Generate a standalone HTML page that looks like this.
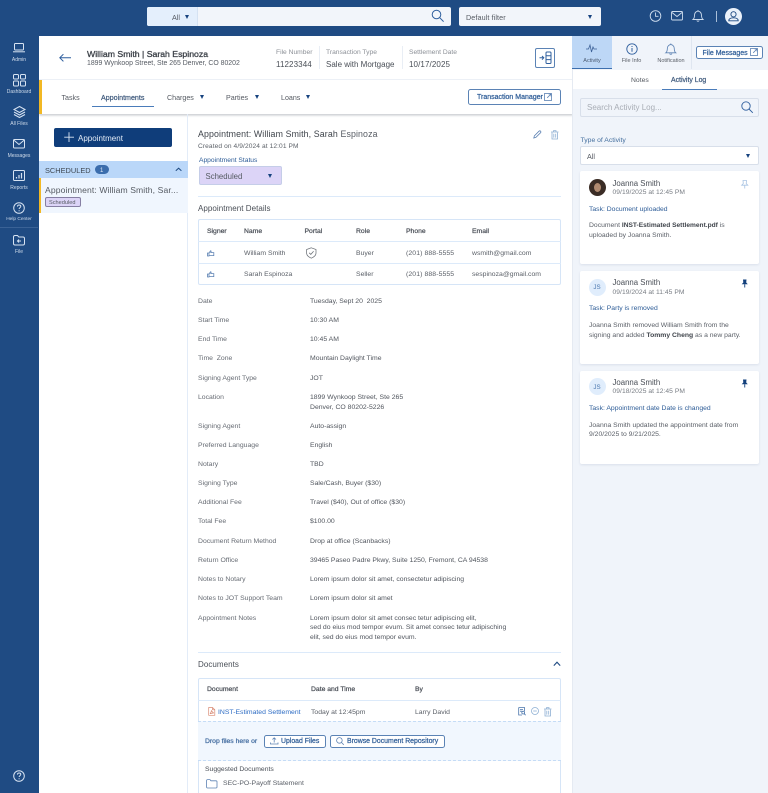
<!DOCTYPE html>
<html style="height:793px;overflow:hidden"><head><meta charset="utf-8"><style>
*{box-sizing:border-box}
html,body{margin:0;padding:0}
body{width:768px;height:793px;overflow:hidden;position:relative;background:#fff;font-family:"Liberation Sans",sans-serif;color:#4a4f57}
#root{position:absolute;left:0;top:0;width:768px;height:793px;overflow:hidden;background:#fff}
.a,.t,.b{position:absolute}
.t{white-space:nowrap;line-height:12px;font-size:6.85px;letter-spacing:0;transform:translateY(-5px)}
.m{font-weight:normal;-webkit-text-stroke:.22px currentColor}
.nav{color:#cfdbea;font-size:5px;width:38px;left:0;text-align:center;letter-spacing:0}
svg{position:absolute;overflow:visible;fill:none}
.wi{stroke:#d7e3f2;stroke-width:1}
.bi{stroke:#2f5f9e;stroke-width:1}
.gi{stroke:#5d82b3;stroke-width:1}
.lbl{color:#666b73;left:198px}
.val{color:#50555d;left:310px}
.tab{font-size:7.1px;color:#555a62}
.btn{border:1px solid #5b83b5;border-radius:2.5px;background:#fff;position:absolute}
.blue{color:#2d5c97}
.card{position:absolute;left:580px;width:179px;background:#fff;border-radius:2px;box-shadow:0 1px 2px rgba(120,140,170,.18)}
.tri{position:absolute;width:0;height:0;border-left:2.8px solid transparent;border-right:2.8px solid transparent;border-top:4px solid #17437f}
.th{font-size:6.8px;color:#4a4f57}
</style></head><body><div id="root">

<!-- top bar + side nav -->
<div class="a" style="left:0;top:0;width:768px;height:36px;background:#1f4b83"></div>
<div class="a" style="left:0;top:0;width:38.5px;height:793px;background:#1f4b83"></div>

<!-- top search -->
<div class="a" style="left:147px;top:7px;width:304px;height:19px;background:#f2f5fa;border-radius:2px"></div>
<div class="a" style="left:147px;top:7px;width:51px;height:19px;background:#e4effc;border-radius:2px 0 0 2px;border-right:1px solid #d5e2f2"></div>
<div class="t" style="left:172px;top:16.5px;color:#555a62;font-size:7.2px">All</div>
<div class="tri" style="left:184.5px;top:14.5px"></div>
<svg width="14" height="14" style="left:431px;top:9px"><circle cx="5.5" cy="5.5" r="4.3" stroke="#2f5f9e"/><path d="M8.7 8.7L12.6 12.6" stroke="#2f5f9e"/></svg>
<div class="a" style="left:459px;top:7px;width:142px;height:19px;background:#f2f5fa;border-radius:2px"></div>
<div class="t" style="left:466px;top:16.5px;color:#555a62;font-size:7.2px;letter-spacing:.1px">Default filter</div>
<div class="tri" style="left:587.5px;top:14.5px"></div>

<!-- top right icons -->
<svg width="14" height="14" style="left:649px;top:9px"><circle cx="6.5" cy="7" r="5.3" stroke="#cddcee" stroke-width=".9"/><path d="M6.5 3.5V7.3H9.5" stroke="#cddcee" stroke-width=".9"/></svg>
<svg width="14" height="12" style="left:671px;top:11px"><rect x=".5" y=".5" width="11" height="8.5" rx="1" stroke="#cddcee" stroke-width=".9"/><path d="M1 1.5L6 5.5L11 1.5" stroke="#cddcee" stroke-width=".9"/></svg>
<svg width="14" height="14" style="left:692px;top:9px"><path d="M1 10.5C2.6 9.2 2.4 7.5 2.6 5.5C2.9 3.3 4.6 2.2 6 2.2C7.4 2.2 9.1 3.3 9.4 5.5C9.6 7.5 9.4 9.2 11 10.5Z M4.8 11.5C5.2 12.5 6.8 12.5 7.2 11.5 M6 1V2.2" stroke="#cddcee" stroke-width=".9"/></svg>
<div class="a" style="left:716px;top:11px;width:1px;height:11px;background:#a9bfd9"></div>
<div class="a" style="left:725px;top:8px;width:17px;height:17px;background:#eaf1fa;border-radius:50%"></div>
<svg width="17" height="17" style="left:725px;top:8px"><circle cx="8.5" cy="6.3" r="2.6" stroke="#1f4b83" stroke-width=".9"/><path d="M3.8 12.8C3.8 10.6 5.8 9.8 8.5 9.8C11.2 9.8 13.2 10.6 13.2 12.8Z" stroke="#1f4b83" stroke-width=".9"/></svg>

<!-- side nav items -->
<svg width="12" height="10" style="left:13px;top:43px"><rect x="1.5" y=".5" width="9" height="6.5" rx=".7" class="wi"/><path d="M0 8.8H12" class="wi"/></svg>
<div class="t nav" style="top:58.5px">Admin</div>
<svg width="13" height="13" style="left:13px;top:74px"><rect x=".5" y=".5" width="5" height="4.5" rx="1" class="wi"/><rect x="7.5" y=".5" width="5" height="4.5" rx="1" class="wi"/><rect x=".5" y="7" width="5" height="5" rx="1" class="wi"/><rect x="7.5" y="7" width="5" height="5" rx="1" class="wi"/></svg>
<div class="t nav" style="top:90.5px">Dashboard</div>
<svg width="13" height="13" style="left:13px;top:106px"><path d="M6.5 .5L12 3.5L6.5 6.5L1 3.5Z M1 6L6.5 9L12 6 M1 8.5L6.5 11.5L12 8.5" class="wi"/></svg>
<div class="t nav" style="top:122.5px">All Files</div>
<svg width="13" height="11" style="left:13px;top:139px"><rect x=".5" y=".5" width="11" height="8.5" rx="1" class="wi"/><path d="M1 1.3L6 5.5L11 1.3" class="wi"/></svg>
<div class="t nav" style="top:154.5px">Messages</div>
<svg width="13" height="13" style="left:13px;top:170px"><rect x=".5" y=".5" width="11" height="10" rx="1" class="wi"/><path d="M3.5 8.5V7 M6 8.5V5 M8.5 8.5V3" stroke="#d7e3f2" stroke-width="1.2"/></svg>
<div class="t nav" style="top:186.5px">Reports</div>
<svg width="13" height="13" style="left:13px;top:202px"><circle cx="6" cy="6" r="5.3" class="wi"/><path d="M4.4 4.6C4.5 3.5 5.2 3 6.1 3C7.1 3 7.8 3.6 7.8 4.4C7.8 5.6 6.1 5.6 6.1 7 M6.1 8.2V9.2" class="wi"/></svg>
<div class="t nav" style="top:218.5px;font-size:4.8px">Help Center</div>
<div class="a" style="left:0;top:227px;width:38px;height:1px;background:#3a6296"></div>
<svg width="13" height="11" style="left:13px;top:235px"><path d="M.5 2C.5 1 1 .5 2 .5H4.5L5.8 2H10C11 2 11.5 2.5 11.5 3.5V8.5C11.5 9.5 11 10 10 10H2C1 10 .5 9.5 .5 8.5Z M8 6H4.5 M6 4.5L4.5 6L6 7.5" class="wi"/></svg>
<div class="t nav" style="top:250.5px">File</div>
<svg width="13" height="13" style="left:13px;top:770px"><circle cx="6" cy="6" r="5.3" class="wi"/><path d="M4.4 4.6C4.5 3.5 5.2 3 6.1 3C7.1 3 7.8 3.6 7.8 4.4C7.8 5.6 6.1 5.6 6.1 7 M6.1 8.2V9.2" class="wi"/></svg>

<!-- header -->
<svg width="13" height="10" style="left:59px;top:53px"><path d="M12 4.8H.8 M4.4 1.2L.8 4.8L4.4 8.4" stroke="#2f5f9e" stroke-width="1"/></svg>
<div class="t m" style="left:87px;top:52.5px;font-size:8.7px;color:#3c4148;-webkit-text-stroke:.3px #3c4148">William Smith | Sarah Espinoza</div>
<div class="t" style="left:87px;top:63px;font-size:6.9px;color:#565b63">1899 Wynkoop Street, Ste 265 Denver, CO 80202</div>
<div class="t" style="left:276px;top:51.5px;color:#8c9097;font-size:6.7px">File Number</div>
<div class="t" style="left:276px;top:63.5px;font-size:8px;color:#4a4f57;letter-spacing:.1px">11223344</div>
<div class="a" style="left:319px;top:46px;width:1px;height:23px;background:#e9eef5"></div>
<div class="t" style="left:326px;top:51.5px;color:#8c9097;font-size:6.7px">Transaction Type</div>
<div class="t" style="left:326px;top:63.5px;font-size:8px;color:#4a4f57">Sale with Mortgage</div>
<div class="a" style="left:402px;top:46px;width:1px;height:23px;background:#e9eef5"></div>
<div class="t" style="left:409px;top:51.5px;color:#8c9097;font-size:6.7px">Settlement Date</div>
<div class="t" style="left:409px;top:63.5px;font-size:8px;color:#4a4f57;letter-spacing:.1px">10/17/2025</div>
<div class="btn" style="left:535px;top:48px;width:20px;height:20px;border-radius:2px"></div>
<svg width="14" height="14" style="left:539px;top:51px"><path d="M.5 6.8H4.8 M3 5L4.8 6.8L3 8.6" stroke="#2f5f9e"/><rect x="7" y="1" width="5" height="11.5" rx="1" stroke="#2f5f9e"/><path d="M7 4.8H12 M7 8.6H12" stroke="#2f5f9e"/></svg>

<!-- tabs row -->
<div class="a" style="left:38.5px;top:79px;width:534px;height:1px;background:#eef2f8"></div>
<div class="a" style="left:38.5px;top:80px;width:534px;height:34px;background:#fff;box-shadow:0 1.5px 2px rgba(70,80,95,.28)"></div>
<div class="a" style="left:38.5px;top:80px;width:3.5px;height:34px;background:#f2b824"></div>
<div class="t tab" style="left:61.5px;top:97px">Tasks</div>
<div class="t tab m" style="left:101px;top:97px;color:#3f5a7d">Appointments</div>
<div class="a" style="left:92px;top:105.5px;width:62px;height:1px;background:#4a7cba"></div>
<div class="t tab" style="left:167px;top:97px">Charges</div><div class="tri" style="left:199.5px;top:95px"></div>
<div class="t tab" style="left:226px;top:97px">Parties</div><div class="tri" style="left:254.5px;top:95px"></div>
<div class="t tab" style="left:281px;top:97px">Loans</div><div class="tri" style="left:305.5px;top:95px"></div>
<div class="btn" style="left:468px;top:89px;width:93px;height:16px"></div>
<div class="t blue m" style="left:477px;top:97px;font-size:7px">Transaction Manager</div>
<svg width="9" height="9" style="left:544px;top:93px"><rect x=".5" y=".5" width="7" height="7" stroke="#5d82b3" stroke-width=".8"/><path d="M3.2 4.8L7 1 M4.6 1H7V3.4" stroke="#5d82b3" stroke-width=".8"/></svg>

<!-- left column -->
<div class="a" style="left:187px;top:114px;width:1px;height:679px;background:#e3ecf8"></div>
<div class="a" style="left:54px;top:128px;width:118px;height:19px;background:#0f3d7a;border-radius:2px"></div>
<svg width="11" height="11" style="left:64px;top:132px"><path d="M5 .3V10 M.2 5.2H10" stroke="#dbe6f4" stroke-width=".9"/></svg>
<div class="t" style="left:78px;top:137.5px;font-size:8px;color:#e3ecf7">Appointment</div>
<div class="a" style="left:38.5px;top:161px;width:149px;height:17px;background:#bad7f9"></div>
<div class="t" style="left:45px;top:169.5px;font-size:7.4px;color:#3f4852">SCHEDULED</div>
<div class="a" style="left:94.5px;top:165px;width:14.5px;height:9px;background:#3b6dad;border-radius:5px"></div>
<div class="t" style="left:100px;top:169.5px;font-size:6px;color:#e3ecf7">1</div>
<svg width="8" height="5" style="left:174.5px;top:167px"><path d="M.8 3.8L3.6 1.2L6.4 3.8" stroke="#1f4b83" stroke-width="1"/></svg>
<div class="a" style="left:38.5px;top:178px;width:149px;height:35px;background:#f0f6fe"></div>
<div class="a" style="left:38.5px;top:178px;width:2px;height:35px;background:#f2b824"></div>
<div class="t" style="left:45px;top:189px;font-size:8.6px;color:#565b63;letter-spacing:.1px">Appointment: William Smith, Sar...</div>
<div class="a" style="left:45px;top:197px;width:36px;height:10px;background:#dcd4f7;border:1px solid #867fa3;border-radius:2px"></div>
<div class="t" style="left:49px;top:202px;font-size:5.6px;color:#555a62">Scheduled</div>

<!-- main column -->
<div class="t" style="left:198px;top:133px;font-size:8.8px;color:#3f444b;letter-spacing:.12px">Appointment: William Smith, Sarah <span style="color:#575c64">Espinoza</span></div>
<div class="t" style="left:198px;top:146px;font-size:6.6px;color:#5d6269;letter-spacing:.1px">Created on 4/9/2024 at 12:01 PM</div>
<svg width="9" height="9" style="left:533px;top:130px"><path d="M.8 8L1.4 5.8L6 1.2C6.5.7 7.2.7 7.6 1.2C8 1.6 8 2.3 7.6 2.7L3 7.3Z" stroke="#5d82b3" stroke-width=".8"/></svg>
<svg width="9" height="10" style="left:550.5px;top:129.5px"><path d="M0 2H7.5 M2.5 2V.7H5V2 M1 2.5V9H6.5V2.5 M2.8 3.8V7.6 M4.7 3.8V7.6" stroke="#8fb0d4" stroke-width=".8"/></svg>
<div class="t blue" style="left:199px;top:160px;font-size:6.7px">Appointment Status</div>
<div class="a" style="left:199px;top:166px;width:83px;height:19px;background:#dcd4f7;border:1px solid #c5cde8;border-radius:2px"></div>
<div class="t" style="left:205.5px;top:175.5px;font-size:7.8px;color:#555a62">Scheduled</div>
<div class="tri" style="left:268px;top:173.5px"></div>
<div class="a" style="left:198px;top:196px;width:363px;height:1px;background:#dceafa"></div>
<div class="t" style="left:198px;top:207.5px;font-size:8px;color:#4a4f57;letter-spacing:.05px">Appointment Details</div>

<!-- signer table -->
<div class="a" style="left:198px;top:218.5px;width:363px;height:66px;border:1px solid #d6e5f7;border-radius:2px"></div>
<div class="a" style="left:198px;top:241px;width:363px;height:1px;background:#dceafa"></div>
<div class="a" style="left:198px;top:263px;width:363px;height:1px;background:#dceafa"></div>
<div class="t th m" style="left:207px;top:230.5px">Signer</div>
<div class="t th m" style="left:244px;top:230.5px">Name</div>
<div class="t th m" style="left:304.5px;top:230.5px">Portal</div>
<div class="t th m" style="left:356px;top:230.5px">Role</div>
<div class="t th m" style="left:406px;top:230.5px">Phone</div>
<div class="t th m" style="left:472px;top:230.5px">Email</div>
<svg width="9" height="7" style="left:207px;top:249.5px"><path d="M.5 3H2V6H.5Z M2 3L3.5 .8C4 .6 4.2 1 4 1.8L3.8 2.6H6.8V5.6H2.2" stroke="#5d82b3" stroke-width=".8"/></svg>
<svg width="9" height="7" style="left:207px;top:271px"><path d="M.5 3H2V6H.5Z M2 3L3.5 .8C4 .6 4.2 1 4 1.8L3.8 2.6H6.8V5.6H2.2" stroke="#5d82b3" stroke-width=".8"/></svg>
<div class="t" style="left:244px;top:253px;color:#5a5f67">William Smith</div>
<div class="t" style="left:244px;top:274px;color:#5a5f67">Sarah Espinoza</div>
<svg width="11" height="12" style="left:305.5px;top:247px"><path d="M5.3.8L10 2.5V6C10 8.7 7.6 10.2 5.3 11.2C3 10.2.6 8.7.6 6V2.5Z M3.2 5.8L4.8 7.4L7.6 4.2" stroke="#6c7178" stroke-width=".75"/></svg>
<div class="t" style="left:356px;top:253px;color:#5a5f67">Buyer</div>
<div class="t" style="left:356px;top:274px;color:#5a5f67">Seller</div>
<div class="t" style="left:406px;top:253px;color:#5a5f67;letter-spacing:.1px">(201) 888-5555</div>
<div class="t" style="left:406px;top:274px;color:#5a5f67;letter-spacing:.1px">(201) 888-5555</div>
<div class="t" style="left:472px;top:253px;color:#5a5f67">wsmith@gmail.com</div>
<div class="t" style="left:472px;top:274px;color:#5a5f67">sespinoza@gmail.com</div>

<!-- details -->
<div class="t lbl" style="top:300.5px">Date</div><div class="t val" style="top:300.5px">Tuesday, Sept 20&nbsp; 2025</div>
<div class="t lbl" style="top:320px">Start Time</div><div class="t val" style="top:320px">10:30 AM</div>
<div class="t lbl" style="top:339px">End Time</div><div class="t val" style="top:339px">10:45 AM</div>
<div class="t lbl" style="top:358px">Time&nbsp; Zone</div><div class="t val" style="top:358px">Mountain Daylight Time</div>
<div class="t lbl" style="top:377.5px">Signing Agent Type</div><div class="t val" style="top:377.5px">JOT</div>
<div class="t lbl" style="top:397px">Location</div><div class="t val" style="top:397px">1899 Wynkoop Street, Ste 265</div><div class="t val" style="top:406.5px">Denver, CO 80202-5226</div>
<div class="t lbl" style="top:425.5px">Signing Agent</div><div class="t val" style="top:425.5px">Auto-assign</div>
<div class="t lbl" style="top:444.5px">Preferred Language</div><div class="t val" style="top:444.5px">English</div>
<div class="t lbl" style="top:463.5px">Notary</div><div class="t val" style="top:463.5px">TBD</div>
<div class="t lbl" style="top:483px">Signing Type</div><div class="t val" style="top:483px">Sale/Cash, Buyer ($30)</div>
<div class="t lbl" style="top:502px">Additional Fee</div><div class="t val" style="top:502px">Travel ($40), Out of office ($30)</div>
<div class="t lbl" style="top:521px">Total Fee</div><div class="t val" style="top:521px">$100.00</div>
<div class="t lbl" style="top:540.5px">Document Return Method</div><div class="t val" style="top:540.5px">Drop at office (Scanbacks)</div>
<div class="t lbl" style="top:559.5px">Return Office</div><div class="t val" style="top:559.5px">39465 Paseo Padre Pkwy, Suite 1250, Fremont, CA 94538</div>
<div class="t lbl" style="top:578.5px">Notes to Notary</div><div class="t val" style="top:578.5px">Lorem ipsum dolor sit amet, consectetur adipiscing</div>
<div class="t lbl" style="top:598px">Notes to JOT Support Team</div><div class="t val" style="top:598px">Lorem ipsum dolor sit amet</div>
<div class="t lbl" style="top:617.5px">Appointment Notes</div><div class="t val" style="top:617.5px">Lorem ipsum dolor sit amet consec tetur adipiscing elit,</div>
<div class="t val" style="top:627px">sed do eius mod tempor evum. Sit amet consec tetur adipisching</div>
<div class="t val" style="top:636.5px">elit, sed do eius mod tempor evum.</div>

<!-- documents -->
<div class="a" style="left:198px;top:652px;width:363px;height:1px;background:#dceafa"></div>
<div class="t" style="left:198px;top:664px;font-size:8px;color:#4a4f57;letter-spacing:.05px">Documents</div>
<svg width="9" height="6" style="left:552.5px;top:661px"><path d="M.8 4.6L4 1.2L7.2 4.6" stroke="#1f4b83" stroke-width="1.1"/></svg>
<div class="a" style="left:198px;top:677.5px;width:363px;height:130px;border:1px solid #d6e5f7;border-radius:2px"></div>
<div class="t th m" style="left:207px;top:688.5px">Document</div>
<div class="t th m" style="left:311px;top:688.5px">Date and Time</div>
<div class="t th m" style="left:415px;top:688.5px">By</div>
<div class="a" style="left:198px;top:700px;width:363px;height:1px;background:#dceafa"></div>
<svg width="8" height="9" style="left:207.5px;top:707px"><path d="M.7.5H4.5L6.8 2.8V8.3H.7Z M4.5.5V2.8H6.8 M2 6.8C3 5.5 3.5 4.5 3.4 3.4C3.9 4.8 4.5 5.5 5.7 6C4.4 6 3 6.2 2 6.8Z" stroke="#d98a74" stroke-width=".7"/></svg>
<div class="t" style="left:218px;top:711.5px;font-size:6.85px;color:#2d6cc4">INST-Estimated Settlement</div>
<div class="t" style="left:311px;top:711.5px;color:#5a5f67">Today at 12:45pm</div>
<div class="t" style="left:415px;top:711.5px;color:#5a5f67">Larry David</div>
<svg width="9" height="9" style="left:518px;top:707px"><path d="M.7.5H6.5V4 M.7.5V8H4 M2 2.5H5 M2 4.2H3.8" stroke="#4b76ac" stroke-width=".8"/><circle cx="5.2" cy="5.6" r="1.4" stroke="#4b76ac" stroke-width=".8"/><path d="M6.3 6.8L7.6 8.2" stroke="#4b76ac" stroke-width=".8"/></svg>
<svg width="9" height="9" style="left:531px;top:707px"><circle cx="4" cy="4" r="3.5" stroke="#8fb0d4" stroke-width=".8"/><path d="M2.2 4H5.8" stroke="#8fb0d4" stroke-width=".8"/></svg>
<svg width="9" height="10" style="left:544px;top:706.5px"><path d="M0 2H7.5 M2.5 2V.7H5V2 M1 2.5V9H6.5V2.5 M2.8 3.8V7.6 M4.7 3.8V7.6" stroke="#8fb0d4" stroke-width=".8"/></svg>
<div class="a" style="left:198px;top:721px;width:363px;height:40px;background:#f1f7fe;border-top:1px dashed #c5dcf6;border-bottom:1px dashed #c5dcf6"></div>
<div class="t m" style="left:205px;top:741px;font-size:6.8px;color:#416b9f">Drop files here or</div>
<div class="btn" style="left:264px;top:734.5px;width:61.5px;height:13px"></div>
<svg width="9" height="8" style="left:270px;top:737px"><path d="M.5 5.5V7H8V5.5 M4.2 5.5V.8 M2.4 2.5L4.2.8L6 2.5" stroke="#5d82b3" stroke-width=".8"/></svg>
<div class="t blue m" style="left:281px;top:741px;font-size:6.9px">Upload Files</div>
<div class="btn" style="left:329.5px;top:734.5px;width:115px;height:13px"></div>
<svg width="9" height="9" style="left:336px;top:736.5px"><circle cx="3.4" cy="3.4" r="2.8" stroke="#5d82b3" stroke-width=".8"/><path d="M5.4 5.4L7.8 7.8" stroke="#5d82b3" stroke-width=".8"/></svg>
<div class="t blue m" style="left:347px;top:741px;font-size:6.9px">Browse Document Repository</div>
<div class="t" style="left:205px;top:769px;font-size:6.8px;color:#4a4f57">Suggested Documents</div>
<svg width="12" height="10" style="left:205.5px;top:778.5px"><path d="M.6 1.6C.6 1 1 .6 1.6.6H4L5 1.8H10C10.6 1.8 11 2.2 11 2.8V8C11 8.6 10.6 9 10 9H1.6C1 9 .6 8.6 .6 8Z" stroke="#5d82b3" stroke-width=".8"/></svg>
<div class="t" style="left:223px;top:783px;color:#5a5f67">SEC-PO-Payoff Statement</div>

<!-- right panel -->
<div class="a" style="left:572px;top:36px;width:196px;height:757px;background:#f0f4fa;border-left:1px solid #e5eaf2"></div>
<div class="a" style="left:572px;top:36px;width:196px;height:33px;background:#f0f4fa"></div>
<div class="a" style="left:572px;top:36px;width:40px;height:33px;background:#bdd7f6;border-bottom:1.5px solid #3d6fae"></div>
<div class="a" style="left:691px;top:36px;width:1px;height:33px;background:#dfe6f0"></div>
<svg width="12" height="11" style="left:586px;top:43px"><path d="M0 6H2.5L4 2L5.5 9L7 4L8 6H11" stroke="#3d6197" stroke-width=".8"/></svg>
<div class="t" style="left:572px;width:40px;text-align:center;top:60px;font-size:5.5px;color:#4a5a70">Activity</div>
<svg width="12" height="12" style="left:625.5px;top:42.5px"><circle cx="6" cy="6" r="5.2" stroke="#2f5f9e" stroke-width=".9"/><path d="M6 5V8.8 M6 3V4" stroke="#2f5f9e" stroke-width="1"/></svg>
<div class="t" style="left:612px;width:39px;text-align:center;top:60px;font-size:5.5px;color:#5a5f67">File Info</div>
<svg width="13" height="12" style="left:665px;top:42.5px"><path d="M.8 9.8C2.4 8.6 2.2 7 2.4 5C2.7 2.8 4.4 1.6 5.8 1.6C7.2 1.6 8.9 2.8 9.2 5C9.4 7 9.2 8.6 10.8 9.8Z M4.6 10.6C5 11.5 6.6 11.5 7 10.6 M5.8.5V1.6" stroke="#5d82b3" stroke-width=".85"/></svg>
<div class="t" style="left:651px;width:40px;text-align:center;top:60px;font-size:5.5px;color:#5a5f67">Notification</div>
<div class="btn" style="left:696px;top:46px;width:67px;height:13px"></div>
<div class="t blue m" style="left:702.5px;top:52.5px;font-size:7px">File Messages</div>
<svg width="9" height="9" style="left:749.5px;top:48px"><rect x=".5" y=".5" width="7" height="7" stroke="#5d82b3" stroke-width=".8"/><path d="M3.2 4.8L7 1 M4.6 1H7V3.4" stroke="#5d82b3" stroke-width=".8"/></svg>

<div class="a" style="left:573px;top:70px;width:195px;height:19px;background:#fff"></div>
<div class="t" style="left:631px;top:79.5px;font-size:6.8px;color:#555a62">Notes</div>
<div class="t m" style="left:671px;top:79.5px;font-size:6.9px;color:#3f5a7d">Activity Log</div>
<div class="a" style="left:662px;top:88.5px;width:55px;height:1px;background:#4a7cba"></div>

<div class="a" style="left:580px;top:98px;width:179px;height:19px;background:#f0f4fa;border:1px solid #d8dfea;border-radius:2px"></div>
<div class="t" style="left:587px;top:107px;font-size:8px;color:#a8adb5">Search Activity Log...</div>
<svg width="13" height="13" style="left:741px;top:101px"><circle cx="5" cy="5" r="4.2" stroke="#2f5f9e" stroke-width=".9"/><path d="M8 8L11.8 11.8" stroke="#2f5f9e" stroke-width=".9"/></svg>

<div class="t" style="left:580.5px;top:140px;font-size:6.8px;color:#46709f">Type of Activity</div>
<div class="a" style="left:580px;top:146px;width:179px;height:19px;background:#fff;border:1px solid #d8dfea;border-radius:2px"></div>
<div class="t" style="left:587px;top:155.5px;font-size:7.2px;color:#555a62">All</div>
<div class="tri" style="left:746px;top:153.5px"></div>

<!-- card 1 -->
<div class="card" style="top:171px;height:93px"></div>
<div class="a" style="left:588.5px;top:178.5px;width:17px;height:17px;background:#3a2c25;border-radius:50%;overflow:hidden"><div class="a" style="left:5px;top:4.5px;width:7px;height:9px;background:#b08a70;border-radius:50%"></div></div>
<div class="t" style="left:612.5px;top:182.5px;font-size:7.8px;color:#4a4f57">Joanna Smith</div>
<div class="t" style="left:612.5px;top:191.5px;font-size:6.7px;color:#787d84;letter-spacing:.05px">09/19/2025 at 12:45 PM</div>
<svg width="8" height="9" style="left:740.5px;top:179.5px"><path d="M2 .5H5.5L5.2 3.5L6.8 5.2H.7L2.3 3.5Z M3.75 5.2V8.5" stroke="#a8c3e3" stroke-width=".8"/></svg>
<div class="t blue" style="left:589px;top:208.5px;font-size:6.8px">Task: Document uploaded</div>
<div class="t" style="left:589px;top:225px;color:#5a5f67;font-size:6.8px">Document <b style="color:#3f444b;font-size:6.6px">INST-Estimated Settlement.pdf</b> is</div>
<div class="t" style="left:589px;top:234.5px;color:#5a5f67;font-size:6.8px">uploaded by Joanna Smith.</div>

<!-- card 2 -->
<div class="card" style="top:271px;height:93px"></div>
<div class="a" style="left:588.5px;top:278.5px;width:17px;height:17px;background:#e0edfc;border-radius:50%"></div>
<div class="t" style="left:588.5px;width:17px;text-align:center;top:287px;font-size:6.2px;color:#4a77ae">JS</div>
<div class="t" style="left:612.5px;top:282px;font-size:7.8px;color:#4a4f57">Joanna Smith</div>
<div class="t" style="left:612.5px;top:291.5px;font-size:6.7px;color:#787d84;letter-spacing:.05px">09/19/2024 at 11:45 PM</div>
<svg width="8" height="9" style="left:740.5px;top:279px"><path d="M2 .5H5.5L5.2 3.5L6.8 5.2H.7L2.3 3.5Z" fill="#13407c"/><path d="M3.75 5.2V8.5" stroke="#13407c" stroke-width=".9"/></svg>
<div class="t blue" style="left:589px;top:308px;font-size:6.8px">Task: Party is removed</div>
<div class="t" style="left:589px;top:324.5px;color:#5a5f67;font-size:6.8px">Joanna Smith removed William Smith from the</div>
<div class="t" style="left:589px;top:334.5px;color:#5a5f67;font-size:6.8px">signing and added <b style="color:#3f444b">Tommy Cheng</b> as a new party.</div>

<!-- card 3 -->
<div class="card" style="top:371px;height:93px"></div>
<div class="a" style="left:588.5px;top:378px;width:17px;height:17px;background:#e0edfc;border-radius:50%"></div>
<div class="t" style="left:588.5px;width:17px;text-align:center;top:386.5px;font-size:6.2px;color:#4a77ae">JS</div>
<div class="t" style="left:612.5px;top:381.5px;font-size:7.8px;color:#4a4f57">Joanna Smith</div>
<div class="t" style="left:612.5px;top:391px;font-size:6.7px;color:#787d84;letter-spacing:.05px">09/18/2025 at 12:45 PM</div>
<svg width="8" height="9" style="left:740.5px;top:379px"><path d="M2 .5H5.5L5.2 3.5L6.8 5.2H.7L2.3 3.5Z" fill="#13407c"/><path d="M3.75 5.2V8.5" stroke="#13407c" stroke-width=".9"/></svg>
<div class="t blue" style="left:589px;top:408px;font-size:6.8px">Task: Appointment date Date is changed</div>
<div class="t" style="left:589px;top:424.5px;color:#5a5f67;font-size:6.8px">Joanna Smith updated the appointment date from</div>
<div class="t" style="left:589px;top:434px;color:#5a5f67;font-size:6.8px">9/20/2025 to 9/21/2025.</div>

</div></body></html>
